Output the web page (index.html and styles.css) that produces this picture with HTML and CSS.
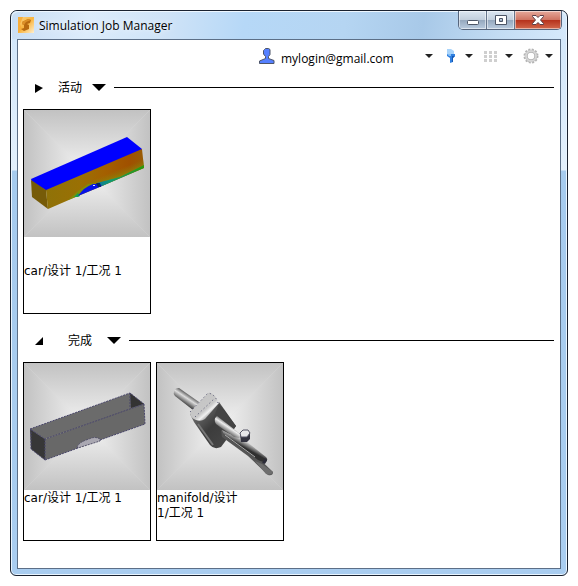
FILE: index.html
```html
<!DOCTYPE html>
<html lang="zh-CN">
<head>
  <meta charset="UTF-8">
  <meta name="viewport" content="width=device-width, initial-scale=1.0">
  <title>Simulation Job Manager</title>
  <link rel="stylesheet" href="styles.css">
</head>
<body>
  <div class="window">
    <!-- Title bar -->
    <header class="titlebar">
      <svg class="app-icon" viewBox="0 0 16 16" aria-hidden="true">
        <defs>
          <linearGradient id="appBg" x1="0" y1="0" x2="1" y2="1">
            <stop offset="0" stop-color="#fbd48a"/>
            <stop offset="0.5" stop-color="#f9b53f"/>
            <stop offset="1" stop-color="#fff0cf"/>
          </linearGradient>
        </defs>
        <rect width="16" height="16" fill="url(#appBg)"/>
        <path d="M0 0h5L2 7l2 5-4 4z" fill="#f8ad3a"/>
        <path d="M4 5l6-3 3 1-1 3-3 1 2 1v4l-5 2-3-2 3-1V8L4 7z" fill="#b86a10"/>
        <path d="M4 5l6-3 3 1-5 2-2 3-2-1z" fill="#dc9028"/>
      </svg>
      <h1 class="title">Simulation Job Manager</h1>
      <div class="controls">
        <button class="control" aria-label="Minimize">
          <svg width="14" height="12" viewBox="0 0 14 12"><rect x="1.500" y="6.500" width="11" height="4" rx="1" fill="#fff" stroke="#4c5566"/></svg>
        </button>
        <button class="control" aria-label="Maximize">
          <svg width="14" height="12" viewBox="0 0 14 12"><path d="M1.500 1.500h11v9h-11zM5.500 4.500v3h3v-3z" fill="#fff" fill-rule="evenodd" stroke="#4c5566"/></svg>
        </button>
        <button class="control close" aria-label="Close">
          <svg width="14" height="12" viewBox="0 0 14 12"><path d="M1.500 1.500h3.500l2 2 2-2h3.500v1L9.500 6l3 3.500v1H9l-2-2-2 2H1.500v-1l3-3.500-3-3.500z" fill="#fff" stroke="#5b3f48"/></svg>
        </button>
      </div>
    </header>

    <main class="client">
      <!-- Toolbar -->
      <div class="toolbar">
        <button class="tool user">
          <svg class="tool-icon" viewBox="0 0 16 16" aria-hidden="true">
            <path d="M5.500 1.500l1-1h3l1.500 1v5l-1.500 2v2l5.500 2v3H.500v-2.500L6.500 10.500v-2L4.500 6V2.500z" fill="#5580ff" stroke="#4d5568"/>
          </svg>
          <span class="login">mylogin@gmail.com</span>
          <span class="caret"></span>
        </button>
        <button class="tool" aria-label="Filter">
          <svg class="tool-icon" viewBox="0 0 16 16" aria-hidden="true">
            <path d="M4 1h4l3 2v3H4z" fill="#a9d4fb"/>
            <path d="M4 6h8v2l-2 2v4l-3 1v-5L4 8z" fill="#2f7fe0"/>
            <path d="M4 6h4v2H6z" fill="#86bff6"/>
            <path d="M9 8h3l-2 2v4H9z" fill="#1458b4"/>
          </svg>
          <span class="caret"></span>
        </button>
        <button class="tool" aria-label="View">
          <svg class="tool-icon" viewBox="0 0 16 16" aria-hidden="true">
            <path d="M1 3h3v3H1zM6 3h3v3H6zM11 3h3v3h-3zM1 7h3v3H1zM6 7h3v3H6zM11 7h3v3h-3zM1 11h3v3H1zM6 11h3v3H6zM11 11h3v3h-3z" fill="#cfcfcf"/>
          </svg>
          <span class="caret"></span>
        </button>
        <button class="tool" aria-label="Settings">
          <svg class="tool-icon" viewBox="0 0 16 16" aria-hidden="true">
            <circle cx="8" cy="8" r="6.500" fill="none" stroke="#b4b4b4" stroke-width="2" stroke-dasharray="2 1.400"/>
            <circle cx="8" cy="8" r="4.800" fill="none" stroke="#b0b0b0" stroke-width="3"/>
            <circle cx="8" cy="8" r="5" fill="none" stroke="#d6d6d6" stroke-width="2"/>
          </svg>
          <span class="caret"></span>
        </button>
      </div>

      <!-- Active jobs -->
      <section>
        <div class="section-head">
          <svg class="toggle" viewBox="0 0 9 10" aria-hidden="true"><path d="M0 1l8 4-8 5z"/></svg>
          <h2 class="section-title">活动</h2>
          <svg class="sort" viewBox="0 0 14 7" aria-hidden="true"><path d="M0 0h14L7 7z"/></svg>
          <span class="rule"></span>
        </div>
        <div class="jobs">
          <article class="job running">
            <svg class="thumb" viewBox="0 0 126 127" aria-hidden="true">
              <defs>
                <linearGradient id="edgeTop" x1="0" y1="0" x2="0" y2="1"><stop offset="0" stop-color="#c2c2c2"/><stop offset="1" stop-color="#f4f4f4"/></linearGradient>
                <linearGradient id="edgeBottom" x1="0" y1="1" x2="0" y2="0"><stop offset="0" stop-color="#c2c2c2"/><stop offset="1" stop-color="#f4f4f4"/></linearGradient>
                <linearGradient id="edgeLeft" x1="0" y1="0" x2="1" y2="0"><stop offset="0" stop-color="#c2c2c2"/><stop offset="1" stop-color="#f4f4f4"/></linearGradient>
                <linearGradient id="edgeRight" x1="1" y1="0" x2="0" y2="0"><stop offset="0" stop-color="#c2c2c2"/><stop offset="1" stop-color="#f4f4f4"/></linearGradient>
                <linearGradient id="stress" x1="0" y1="0" x2="1" y2="0">
                  <stop offset="0" stop-color="#8f7208"/>
                  <stop offset="0.350" stop-color="#9a7004"/>
                  <stop offset="0.600" stop-color="#a46000"/>
                  <stop offset="0.850" stop-color="#a05000"/>
                  <stop offset="1" stop-color="#985c04"/>
                </linearGradient>
                <linearGradient id="warm" gradientUnits="userSpaceOnUse" x1="92" y1="60" x2="96" y2="70">
                  <stop offset="0" stop-color="#8f7a08" stop-opacity="0"/>
                  <stop offset="1" stop-color="#7f9808"/>
                </linearGradient>
                <linearGradient id="cool" x1="0" y1="0" x2="1" y2="0">
                  <stop offset="0" stop-color="#0a78a0"/>
                  <stop offset="0.300" stop-color="#109a70"/>
                  <stop offset="1" stop-color="#2c9a08"/>
                </linearGradient>
                <g id="backdrop">
                  <rect width="126" height="127" fill="#dedede"/>
                  <path d="M0 0h126L63 64z" fill="url(#edgeTop)"/>
                  <path d="M0 127h126L63 63z" fill="url(#edgeBottom)"/>
                  <path d="M0 0v127l63-63z" fill="url(#edgeLeft)"/>
                  <path d="M126 0v127L63 64z" fill="url(#edgeRight)"/>
                </g>
              </defs>
              <use href="#backdrop"/>
              <path d="M7 69L103 27l15 12v3L23 81 8 72z" fill="#0000ff"/>
              <path d="M7 70l15 10 2 19L8 87z" fill="#765b08"/>
              <path d="M22 80L118 39l2 19-42 18-24 10-30 13z" fill="url(#stress)"/>
              <path d="M62 74l28-14 30-14v11L78 76z" fill="url(#warm)"/>
              <path d="M73 73l23-6 24-12v3L78 76z" fill="url(#cool)"/>
              <path d="M44 90l10-9 10-7 8-1-4 3-14 10z" fill="#7f8e08"/>
              <path d="M50 87l4-4 2 3-2 1z" fill="#16a050"/>
              <path d="M54 86q6-9 15-12h7l2 2-12 5z" fill="#0712e8"/>
              <path d="M72 73l4 0 1 4-3 0z" fill="#06265e"/>
              <path d="M69 75h2v1h-2z" fill="#dfe8ff"/>
            </svg>
            <p class="job-name">car/设计 1/工况 1</p>
          </article>
        </div>
      </section>

      <!-- Completed jobs -->
      <section class="completed">
        <div class="section-head">
          <svg class="toggle" viewBox="0 0 9 10" aria-hidden="true"><path d="M8 1v8H0z"/></svg>
          <h2 class="section-title">完成</h2>
          <svg class="sort" viewBox="0 0 14 7" aria-hidden="true"><path d="M0 0h14L7 7z"/></svg>
          <span class="rule"></span>
        </div>
        <div class="jobs">
          <article class="job">
            <svg class="thumb" viewBox="0 0 126 127" aria-hidden="true">
              <use href="#backdrop"/>
              <path d="M6 66L106 30l14 12L21 76z" fill="#6b6b6b"/>
              <path d="M106 30l14 11-13 4z" fill="#333"/>
              <path d="M6 66l15 10v21L7 86z" fill="#373737"/>
              <path d="M21 76L120 41l1 20-45 16-22 8-33 12z" fill="#686868"/>
              <path d="M53 84q2-5 12-8 6-3 11 0v2l-22 7z" fill="#aaa8b2" stroke="#55536a" stroke-dasharray="2 1"/>
              <path d="M6 66L106 30l14 11L21 76zM21 76v21L7 86V66M21 97l33-12M76 77l45-16-1-20M106 30v15" fill="none" stroke="#49466b" stroke-dasharray="2 1"/>
            </svg>
            <p class="job-name">car/设计 1/工况 1</p>
          </article>
          <article class="job">
            <svg class="thumb" viewBox="0 0 126 127" aria-hidden="true">
              <defs>
                <linearGradient id="pipe" gradientUnits="userSpaceOnUse" x1="30" y1="30" x2="24" y2="39">
                  <stop offset="0" stop-color="#555"/>
                  <stop offset="0.400" stop-color="#ddd"/>
                  <stop offset="1" stop-color="#383838"/>
                </linearGradient>
                <linearGradient id="pipeLow" gradientUnits="userSpaceOnUse" x1="86" y1="72" x2="81" y2="81">
                  <stop offset="0" stop-color="#444"/>
                  <stop offset="0.400" stop-color="#d2d2d2"/>
                  <stop offset="1" stop-color="#303030"/>
                </linearGradient>
                <linearGradient id="pipeMid" gradientUnits="userSpaceOnUse" x1="73" y1="60" x2="67" y2="69">
                  <stop offset="0" stop-color="#555"/>
                  <stop offset="0.400" stop-color="#eee"/>
                  <stop offset="1" stop-color="#444"/>
                </linearGradient>
                <linearGradient id="block" x1="0" y1="0" x2="1" y2="1">
                  <stop offset="0" stop-color="#888"/>
                  <stop offset="0.500" stop-color="#3c3c3c"/>
                  <stop offset="1" stop-color="#4a4a4a"/>
                </linearGradient>
                <linearGradient id="cap" gradientUnits="userSpaceOnUse" x1="38" y1="38" x2="54" y2="56">
                  <stop offset="0" stop-color="#c4c4c4"/>
                  <stop offset="0.550" stop-color="#c8c8c8"/>
                  <stop offset="0.700" stop-color="#f0f0f0"/>
                  <stop offset="1" stop-color="#555"/>
                </linearGradient>
              </defs>
              <use href="#backdrop"/>
              <path d="M22 25l20 14-6 8-18-14q-2-2-1-5t5-3z" fill="url(#pipe)"/>
              <path d="M33 51l4 8 16 23q4 5 11 2l6-8 9-13-17-24z" fill="url(#block)"/>
              <path d="M62 41l17 22-9 12-14-19z" fill="#444"/>
              <path d="M33 49l18-19q3-1 7 3l4 7-14 16q-4 3-9 1-6-2-6-8z" fill="url(#cap)"/>
              <path d="M38 54l20-19M33 49l18-19q7 1 10 10" fill="none" stroke="#484868" stroke-dasharray="1 3"/>
              <path d="M41 61l15 21" stroke="#777" stroke-width="2"/>
              <path d="M64 67l29 20 23 22q0 4-5 3L91 93 65 74z" fill="#555"/>
              <path d="M80 71l29 23q3 3-1 6l-7-3-34-25-2-5 14 7z" fill="url(#pipeLow)"/>
              <path d="M60 53l22 17q3 3 0 5l-5-1-18-13q-3-5 1-8z" fill="url(#pipeMid)"/>
              <path d="M68 72l30 22" stroke="#aaa"/>
              <path d="M105 101l-7-3 11 13q5 2 7-2z" fill="#6e6e6e"/>
              <path d="M105 100l3-5 2 2-2 4z" fill="#2c2c38"/>
              <path d="M83 71l5-3 5 2v6l-3 3h-6z" fill="#333340"/>
              <path d="M83 70l3-3h5l2 3-3 4h-6z" fill="#e6e6ea" stroke="#555566"/>
            </svg>
            <p class="job-name">manifold/设计<br>1/工况 1</p>
          </article>
        </div>
      </section>
    </main>
  </div>
</body>
</html>
```
FILE: styles.css
```css
* {
  box-sizing: border-box;
}

body {
  margin: 0;
  padding: 10px;
  background-color: #fff;
  color: #000;
  font-family: "Open Sans", "Noto Sans CJK SC", sans-serif;
  font-size: 12px;
  line-height: 15px;
}

h1, h2, p {
  margin: 0;
  font-size: 12px;
  font-weight: normal;
}

button {
  margin: 0;
  padding: 0;
  border: none;
  background: none;
  font: inherit;
  color: inherit;
}

svg {
  display: block;
  flex: none;
}

/* Window frame */
.window {
  display: flex;
  flex-direction: column;
  min-height: calc(100vh - 20px);
  padding: 0 6px 6px;
  border: 1px solid #1a2230;
  border-radius: 7px 7px 6px 6px;
  background: linear-gradient(#c3ddf5 0, #d3e7fa 30px, #e3f0fc 159px, #a6cbee 160px, #a9cdf0 100%);
  box-shadow: inset 0 0 0 1px #e9f5ff;
}

.titlebar {
  display: flex;
  align-items: center;
  height: 28px;
  margin: 0 -5px;
  padding: 0 4px 0 6px;
  border-radius: 6px 6px 0 0;
  background: linear-gradient(100deg, #c9def4 0, #dcecfb 14%, #cfe3f7 28%, #b6d8f7 42%, #b5d5f2 60%, #a8c9e8 74%, #c3dcf3 88%, #d6e9fb 100%);
  box-shadow: inset 0 1px 0 #eef7ff;
}

.app-icon {
  width: 16px;
  height: 16px;
  margin-right: 5px;
}

.title {
  flex: 1;
  text-shadow: 0 0 6px #fff;
}

.controls {
  display: flex;
  align-self: flex-start;
  border: 1px solid #56657c;
  border-top: none;
  border-radius: 0 0 5px 5px;
  overflow: hidden;
}

.control {
  display: flex;
  justify-content: center;
  align-items: center;
  width: 28px;
  height: 18px;
  border-right: 1px solid #65758c;
  background: linear-gradient(#dbe6f1 0, #c2cfdd 48%, #94a7bd 50%, #b9cbdf 100%);
  box-shadow: inset 0 0 0 1px rgba(255, 255, 255, 0.5);
}

.control.close {
  width: 46px;
  border-right: none;
  background: linear-gradient(#e5a99b 0, #cf7563 48%, #b5301b 50%, #d2684c 100%);
}

.client {
  flex: 1;
  padding: 0 6px 10px 5px;
  border: 1px solid #5c6f87;
  background-color: #fff;
}

/* Toolbar */
.toolbar {
  display: flex;
  justify-content: flex-end;
  gap: 10px;
  height: 32px;
  padding-right: 1px;
}

.tool {
  display: flex;
  align-items: center;
  gap: 6px;
}

.user {
  width: 174px;
}

.tool-icon {
  width: 16px;
  height: 16px;
}

.login {
  padding-top: 4px;
}

.caret {
  width: 8px;
  height: 4px;
  margin-left: auto;
  background-color: #222;
  clip-path: polygon(0 0, 100% 0, 50% 100%);
}

/* Job groups */
.section-head {
  display: flex;
  align-items: center;
  gap: 10px;
  height: 31px;
  padding-left: 12px;
}

.toggle {
  width: 9px;
  height: 10px;
  margin-right: 4px;
}

.sort {
  width: 14px;
  height: 7px;
}

.rule {
  flex: 1;
  height: 1px;
  margin-left: -2px;
  background-color: #000;
}

.completed {
  margin-top: 5px;
}

.completed .toggle {
  margin-right: 14px;
}

.completed .section-title {
  margin-right: 5px;
}

.jobs {
  display: flex;
  flex-wrap: wrap;
  gap: 5px;
  padding: 6px 0;
}

.job {
  width: 128px;
  min-height: 179px;
  border: 1px solid #000;
  font-family: "DejaVu Sans", "Noto Sans CJK SC", sans-serif;
}

.job.running {
  min-height: 205px;
}

.thumb {
  width: 100%;
  height: auto;
}

.job-name {
  padding: 1px 0;
}

.running .job-name {
  padding-top: 27px;
}
```
